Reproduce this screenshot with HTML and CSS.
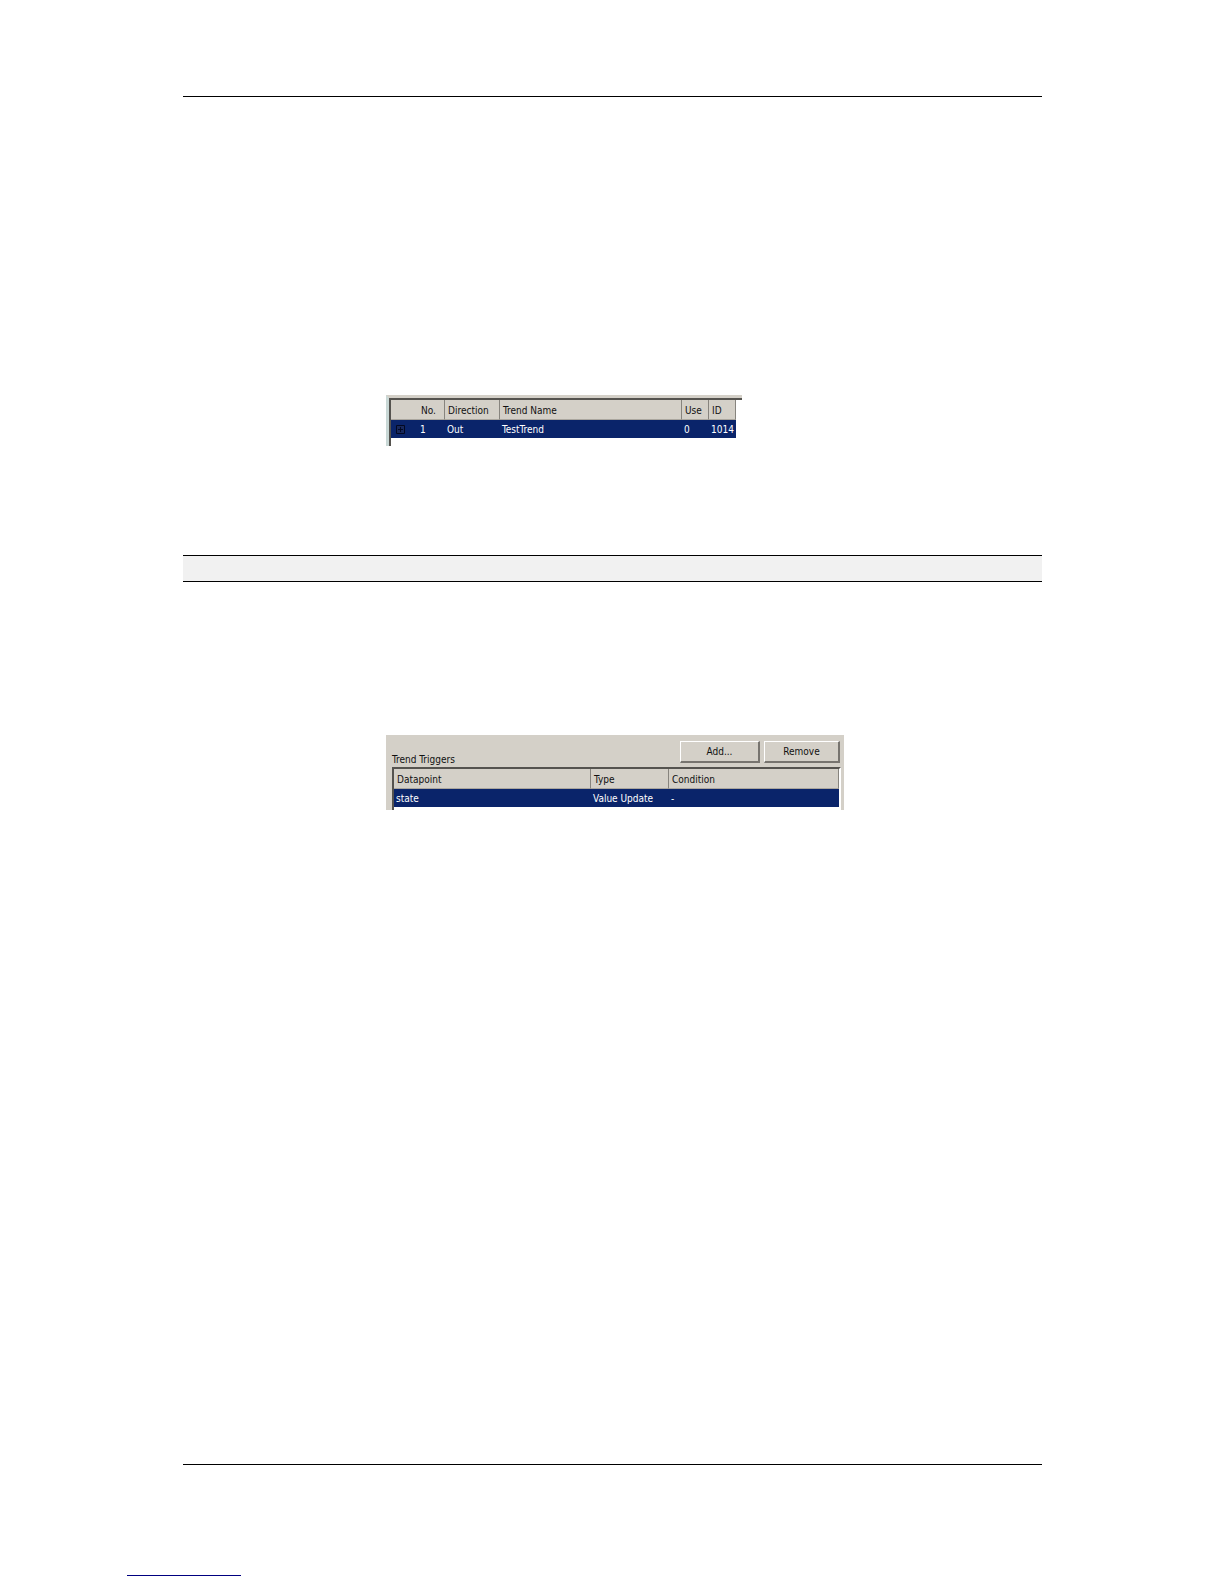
FILE: index.html
```html
<!DOCTYPE html>
<html lang="en">
<head>
<meta charset="utf-8">
<title>Trend Triggers</title>
<link rel="stylesheet" href="styles.css">
</head>
<body>
<div class="sheet">
  <main class="content">
    <section class="trends" aria-label="Trends">
      <div class="trends-frame">
        <table class="grid">
          <colgroup><col class="c-mark"><col class="c-no"><col class="c-dir"><col><col class="c-use"><col class="c-id"></colgroup>
          <thead><tr><th class="plain"></th><th>No.</th><th>Direction</th><th>Trend Name</th><th>Use</th><th>ID</th></tr></thead>
          <tbody><tr>
            <td><button class="expand" type="button" aria-label="Expand"><svg width="9" height="9" viewBox="0 0 9 9"><path d="M.5.5h8v8h-8zM2 4.5h5M4.5 2v5" fill="none" stroke="currentColor"/></svg></button></td>
            <td>1</td><td>Out</td><td>TestTrend</td><td>0</td><td>1014</td></tr></tbody>
        </table>
      </div>
    </section>
    <div class="band"></div>
    <section class="triggers">
      <div class="toolbar">
        <h2 class="title">Trend Triggers</h2>
        <div class="buttons">
          <button class="btn btn-add" type="button">Add...</button>
          <button class="btn btn-remove" type="button">Remove</button>
        </div>
      </div>
      <div class="triggers-frame">
        <table class="grid">
          <colgroup><col class="c-point"><col class="c-type"><col></colgroup>
          <thead><tr><th>Datapoint</th><th>Type</th><th>Condition</th></tr></thead>
          <tbody><tr><td>state</td><td>Value Update</td><td>-</td></tr></tbody>
        </table>
      </div>
    </section>
  </main>
  <footer class="footer"></footer>
</div>
</body>
</html>
```
FILE: styles.css
```css
* { box-sizing: border-box; }
body {
  margin: 0;
  background: #fff;
  color: #111;
  font: 10px/17px "DejaVu Sans Condensed", Tahoma, sans-serif;
}
.sheet {
  min-height: 100vh;
  padding: 96px 0 8px;
  display: flex;
  flex-direction: column;
}
.content {
  flex: 1;
  margin: 0 182px 0 183px;
  border-top: 1px solid #000;
  border-bottom: 1px solid #000;
}
.trends {
  width: 356px;
  margin: 298px 0 0 203px;
  border-top: 3px solid #d4d0c8;
  border-left: 3px solid #c9d8d6;
}
.trends-frame {
  height: 48px;
  padding-right: 6px;
  border-top: 2px solid #55534f;
  border-left: 2px solid #55534f;
}
.grid {
  width: 100%;
  table-layout: fixed;
  border-collapse: separate;
  border-spacing: 0;
}
.grid th, .grid td {
  padding: 0 0 0 3px;
  text-align: left;
  font-weight: normal;
  white-space: nowrap;
}
.grid th {
  height: 20px;
  padding-top: 2px;
  background: #d4d0c8;
  border-right: 1px solid #87847e;
  border-bottom: 1px solid #aaa69e;
}
.grid th.plain { border-right: 0; }
.grid td {
  height: 18px;
  padding-left: 2px;
  background: #0a246a;
  color: #fff;
}
.c-mark { width: 27px; }
.c-no { width: 27px; }
.c-dir { width: 55px; }
.c-use { width: 27px; }
.c-id { width: 27px; }
.expand {
  display: block;
  margin-left: 3px;
  padding: 0;
  border: 0;
  background: #18285c;
  color: #020822;
  line-height: 0;
}
.band {
  height: 27px;
  margin-top: 109px;
  background: #f1f1f1;
  border-top: 1px solid #000;
  border-bottom: 1px solid #000;
}
.triggers {
  width: 458px;
  margin: 153px 0 0 203px;
  padding: 6px 3px 0 6px;
  background: #d4d0c8;
}
.toolbar {
  display: flex;
  justify-content: space-between;
  align-items: flex-end;
  height: 26px;
  padding-right: 1px;
}
.title { margin: 0; font-size: 10px; font-weight: normal; line-height: 15px; }
.buttons { display: flex; gap: 4px; align-self: flex-start; }
.btn {
  height: 22px;
  padding: 0;
  background: #d4d0c8;
  border: 1px solid #fff;
  border-right: 2px solid #77746f;
  border-bottom: 2px solid #77746f;
  color: #111;
  font: inherit;
}
.btn-add { width: 80px; }
.btn-remove { width: 76px; }
.triggers-frame {
  height: 43px;
  background: #fff;
  border-top: 2px solid #55534f;
  border-left: 2px solid #55534f;
  border-right: 2px solid #fff;
}
.c-point { width: 197px; }
.c-type { width: 78px; }
.footer {
  width: 114px;
  margin: 110px 0 0 127px;
  border-top: 1px solid #000080;
}
```
